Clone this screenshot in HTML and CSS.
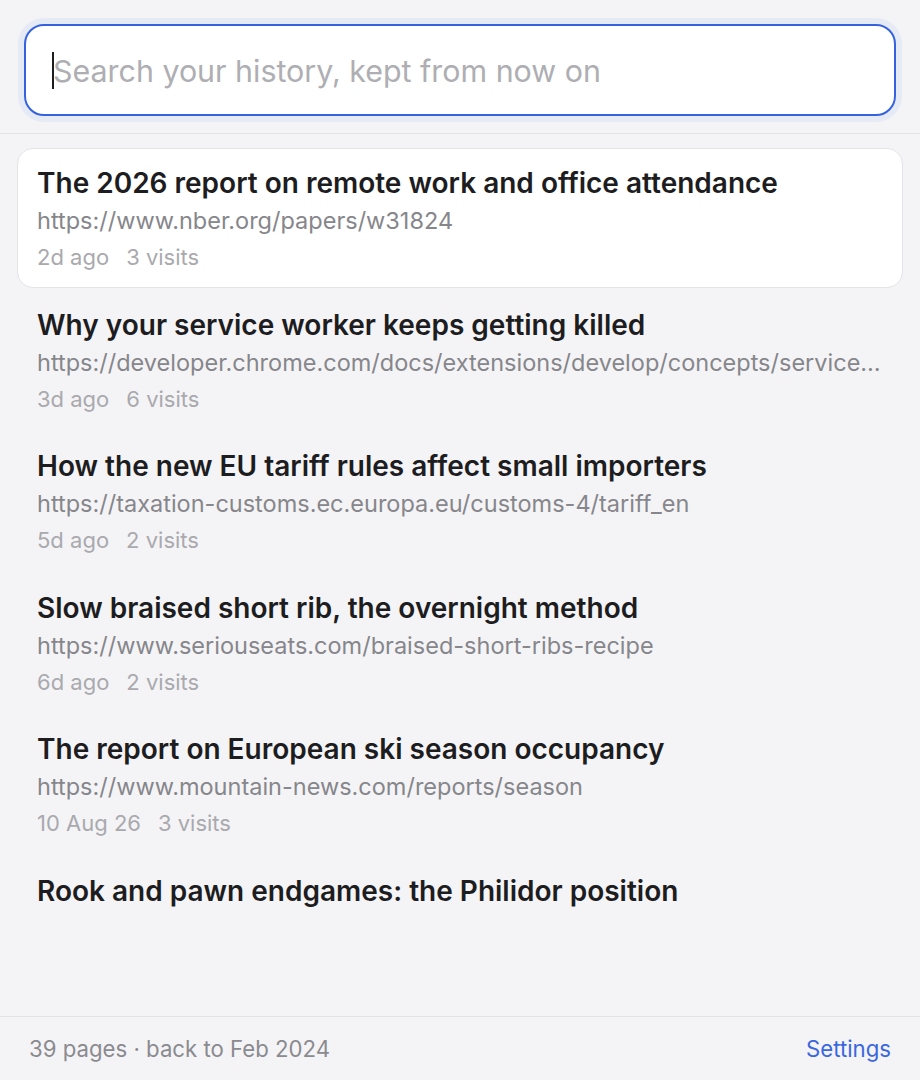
FILE: index.html
```html
<!DOCTYPE html>
<html lang="en">
<head>
<meta charset="utf-8">
<title>History</title>
<link rel="stylesheet" href="styles.css">
</head>
<body>
<div class="app">
  <header class="search-bar">
    <div class="search-field">
      <span class="caret"></span>
      <input class="search-input" type="text" placeholder="Search your history, kept from now on">
    </div>
  </header>
  <main class="results">
    <a class="item item-active">
      <div class="item-title">The 2026 report on remote work and office attendance</div>
      <div class="item-url">https://www.nber.org/papers/w31824</div>
      <div class="item-meta"><span>2d ago</span><span>3 visits</span></div>
    </a>
    <a class="item">
      <div class="item-title">Why your service worker keeps getting killed</div>
      <div class="item-url">https://developer.chrome.com/docs/extensions/develop/concepts/service-workers/lifecycle</div>
      <div class="item-meta"><span>3d ago</span><span>6 visits</span></div>
    </a>
    <a class="item">
      <div class="item-title">How the new EU tariff rules affect small importers</div>
      <div class="item-url">https://taxation-customs.ec.europa.eu/customs-4/tariff_en</div>
      <div class="item-meta"><span>5d ago</span><span>2 visits</span></div>
    </a>
    <a class="item">
      <div class="item-title">Slow braised short rib, the overnight method</div>
      <div class="item-url">https://www.seriouseats.com/braised-short-ribs-recipe</div>
      <div class="item-meta"><span>6d ago</span><span>2 visits</span></div>
    </a>
    <a class="item">
      <div class="item-title">The report on European ski season occupancy</div>
      <div class="item-url">https://www.mountain-news.com/reports/season</div>
      <div class="item-meta"><span>10 Aug 26</span><span>3 visits</span></div>
    </a>
    <a class="item">
      <div class="item-title">Rook and pawn endgames: the Philidor position</div>
    </a>
  </main>
  <footer class="footer">
    <span class="footer-info">39 pages · back to Feb 2024</span>
    <a class="footer-link">Settings</a>
  </footer>
</div>
</body>
</html>
```
FILE: styles.css
```css
* { box-sizing: border-box; }
html, body {
  margin: 0;
  padding: 0;
  height: 100%;
}
body {
  background: #f4f4f6;
  font-family: Inter, "Noto Sans", "Liberation Sans", sans-serif;
  color: #1d1d1f;
}
.app {
  height: 100vh;
  display: flex;
  flex-direction: column;
}
.search-bar {
  padding: 24px 24px 17px;
  border-bottom: 1px solid #e3e3e8;
  flex: none;
}
.search-field {
  position: relative;
  border-radius: 20px;
  box-shadow: 0 0 0 6px #e6eaf4;
}
.search-input {
  display: block;
  width: 100%;
  height: 92px;
  border: 2px solid #3563e0;
  border-radius: 20px;
  background: #fff;
  padding: 2px 27px 0;
  font-family: inherit;
  font-size: 30.4px;
  color: #1d1d1f;
  outline: none;
  caret-color: transparent;
}
.search-input::placeholder {
  color: #aeaeb3;
}
.caret {
  position: absolute;
  left: 28px;
  top: 28px;
  width: 2px;
  height: 37px;
  background: #1d1d1f;
}
.results {
  flex: 1;
  overflow: hidden;
  padding: 14px 17px 0;
  display: flex;
  flex-direction: column;
  gap: 2px;
}
.item {
  display: block;
  flex: none;
  padding: 16px 19px 12.6px;
  border: 1px solid transparent;
  border-radius: 16px;
}
.item-active {
  background: #fff;
  border-color: #e4e4e9;
}
.item-title {
  font-size: 28px;
  font-weight: 600;
  line-height: 37px;
  color: #1d1d1f;
  white-space: nowrap;
  overflow: hidden;
  text-overflow: ellipsis;
}
.item-url {
  margin-top: 2px;
  font-size: 23.5px;
  line-height: 34px;
  color: #86868b;
  white-space: nowrap;
  overflow: hidden;
  text-overflow: ellipsis;
}
.item-meta {
  margin-top: 2px;
  font-size: 22px;
  line-height: 34px;
  color: #a9a9ae;
  display: flex;
  gap: 17px;
}
.footer {
  flex: none;
  height: 64px;
  border-top: 1px solid #e3e3e8;
  display: flex;
  align-items: center;
  justify-content: space-between;
  padding: 0 29px;
  font-size: 22.2px;
}
.footer-info {
  color: #8a8a8f;
}
.footer-link {
  color: #3a66e0;
}
```
